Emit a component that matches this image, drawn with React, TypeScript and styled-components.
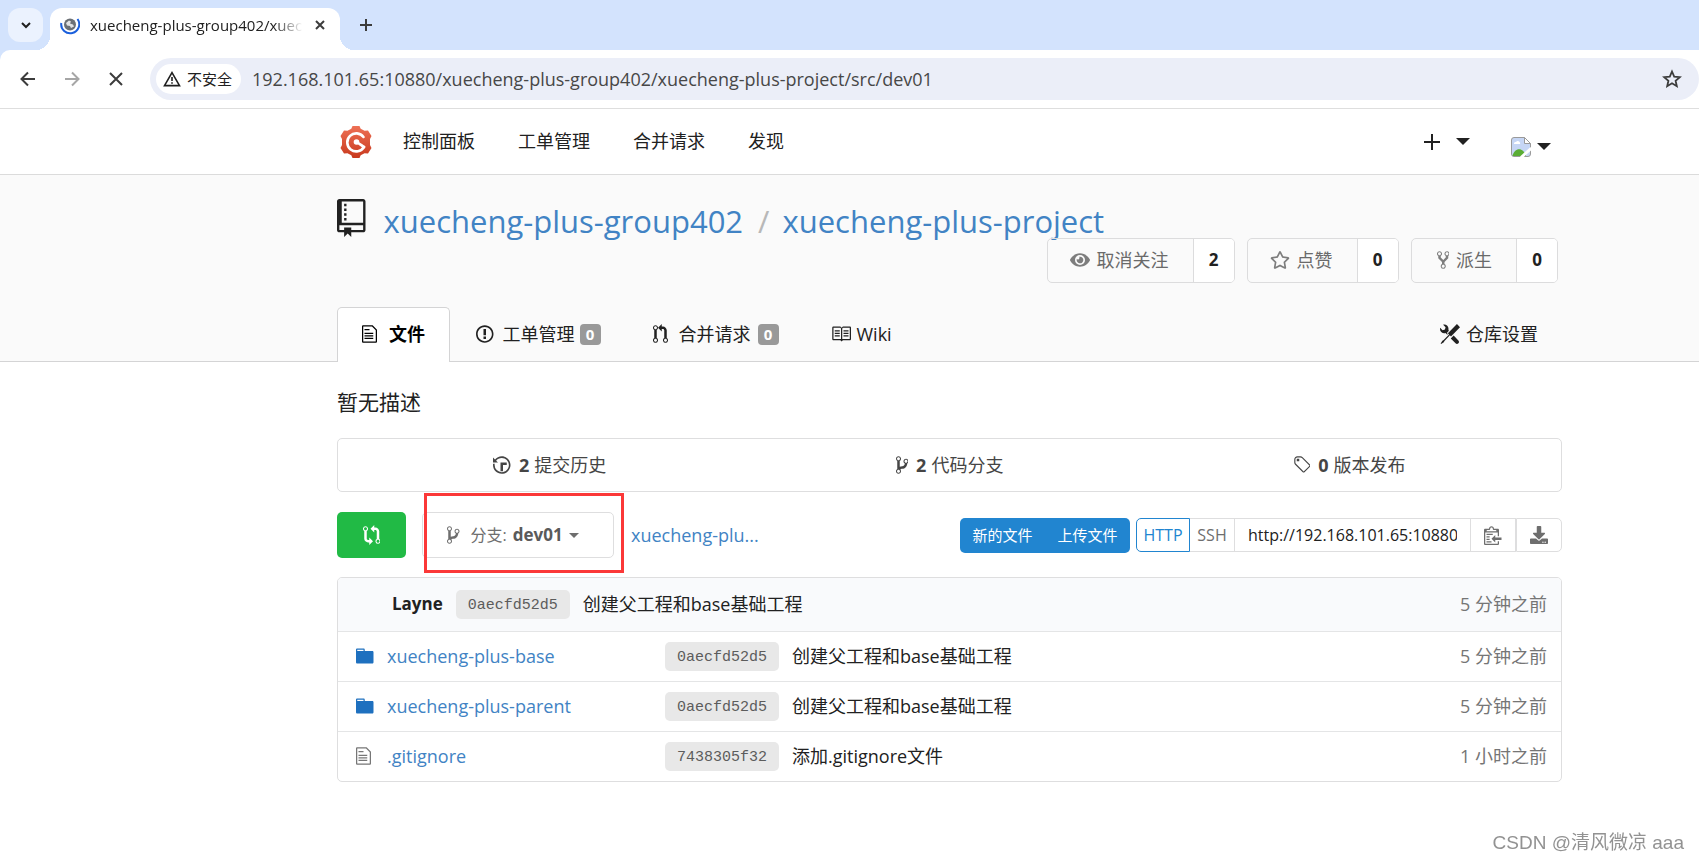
import React from 'react';
import styled, { createGlobalStyle, css } from 'styled-components';
import { FaDownload, FaEye, FaRegStar } from 'react-icons/fa';

const GlobalStyle = createGlobalStyle`
  *, *::before, *::after { box-sizing: border-box; }
  body {
    margin: 0;
    background: #fff;
    color: #212121;
    font-family: "Open Sans", "Noto Sans CJK SC", sans-serif;
    font-size: 18px;
    line-height: 24px;
  }
  button, input {
    font: inherit;
    color: inherit;
    margin: 0;
    padding: 0;
    border: 0;
    background: none;
  }
  button { cursor: pointer; }
  a { color: inherit; text-decoration: none; }
  svg { display: block; flex: none; }
`;

/* ---------- icons ---------- */

const icons = {
  repo: [12, 'M4 9H3V8h1v1zm0-3H3v1h1V6zm0-2H3v1h1V4zm0-2H3v1h1V2zm8-1v12c0 .55-.45 1-1 1H6v2l-1.5-1.5L3 16v-2H1c-.55 0-1-.45-1-1V1c0-.55.45-1 1-1h10c.55 0 1 .45 1 1zm-1 10H1v2h2v-1h3v1h5v-2zm0-10H2v9h9V1z'],
  file: [12, 'M6 5H2V4h4v1zM2 8h7V7H2v1zm0 2h7V9H2v1zm0 2h7v-1H2v1zm10-7.5V14c0 .55-.45 1-1 1H1c-.55 0-1-.45-1-1V2c0-.55.45-1 1-1h7.5L12 4.5zM11 5L8 2H1v12h10V5z'],
  issue: [14, 'M7 2.3c3.14 0 5.7 2.56 5.7 5.7s-2.56 5.7-5.7 5.7A5.71 5.71 0 0 1 1.3 8c0-3.14 2.56-5.7 5.7-5.7zM7 1C3.14 1 0 4.14 0 8s3.14 7 7 7 7-3.14 7-7-3.14-7-7-7zm1 3H6v5h2V4zm0 6H6v2h2v-2z'],
  pull: [12, 'M11 11.28V5c-.03-.78-.34-1.47-.94-2.06C9.46 2.35 8.78 2.03 8 2H7V0L4 3l3 3V4h1c.27.02.48.11.69.31.21.2.3.42.31.69v6.28A1.993 1.993 0 0 0 10 15a1.993 1.993 0 0 0 1-3.72zm-1 2.92c-.66 0-1.2-.55-1.2-1.2 0-.65.55-1.2 1.2-1.2.65 0 1.2.55 1.2 1.2 0 .65-.55 1.2-1.2 1.2zM4 3c0-1.11-.89-2-2-2a1.993 1.993 0 0 0-1 3.72v6.56A1.993 1.993 0 0 0 2 15a1.993 1.993 0 0 0 1-3.72V4.72c.59-.34 1-.98 1-1.72zm-.8 10c0 .66-.55 1.2-1.2 1.2-.65 0-1.2-.55-1.2-1.2 0-.65.55-1.2 1.2-1.2.65 0 1.2.55 1.2 1.2zM2 4.2C1.34 4.2.8 3.65.8 3c0-.65.55-1.2 1.2-1.2.65 0 1.2.55 1.2 1.2 0 .65-.55 1.2-1.2 1.2z'],
  book: [16, 'M3 5h4v1H3V5zm0 3h4V7H3v1zm0 2h4V9H3v1zm11-5h-4v1h4V5zm0 2h-4v1h4V7zm0 2h-4v1h4V9zm2-6v9c0 .55-.45 1-1 1H9.5l-1 1-1-1H2c-.55 0-1-.45-1-1V3c0-.55.45-1 1-1h5.5l1 1 1-1H15c.55 0 1 .45 1 1zm-8 .5L7.5 3H2v9h6V3.5zm7-.5H9.5l-.5.5V12h6V3z'],
  tools: [16, 'M4.48 7.27c.26.26 1.28 1.33 1.28 1.33l.56-.58-.88-.91 1.69-1.8s-.76-.74-.43-.45c.32-1.19.03-2.51-.87-3.44C4.93.5 3.66.2 2.52.51l1.93 2-.51 1.96-1.89.52-1.93-1.99C-.19 4.17.1 5.48 1 6.4c.94.98 2.29 1.26 3.48.87zm6.44 1.94l-2.33 2.3 3.84 3.98c.31.33.73.49 1.14.49.41 0 .82-.16 1.14-.49.63-.65.63-1.7 0-2.35l-3.79-3.93zM16 2.53L13.55 0 6.33 7.46l.88.91-4.31 4.46-.99.53-1.39 2.27.35.37 2.2-1.44.51-1.02L7.9 9.08l.88.91L16 2.53z'],
  history: [14, 'M8 13H6V6h5v2H8v5zM7 1C4.81 1 2.87 2.02 1.59 3.59L0 2v4h4L2.5 4.5C3.55 3.17 5.17 2.3 7 2.3c3.14 0 5.7 2.56 5.7 5.7s-2.56 5.7-5.7 5.7A5.71 5.71 0 0 1 1.3 8c0-.34.03-.67.09-1H.08C.03 7.33 0 7.66 0 8c0 3.86 3.14 7 7 7s7-3.14 7-7-3.14-7-7-7z'],
  branch: [10, 'M10 5c0-1.11-.89-2-2-2a1.993 1.993 0 0 0-1 3.72v.3c-.02.52-.23.98-.63 1.38-.4.4-.86.61-1.38.63-.83.02-1.48.16-2 .45V4.72a1.993 1.993 0 0 0-1-3.72C.88 1 0 1.89 0 3a2 2 0 0 0 1 1.72v6.56c-.59.35-1 .99-1 1.72 0 1.11.89 2 2 2 1.11 0 2-.89 2-2 0-.53-.2-1-.53-1.36.09-.06.48-.41.59-.47.25-.11.56-.17.94-.17 1.05-.05 1.95-.45 2.75-1.25S8.95 7.77 9 6.73h-.02C9.59 6.37 10 5.73 10 5zM2 1.8c.66 0 1.2.55 1.2 1.2 0 .65-.55 1.2-1.2 1.2C1.35 4.2.8 3.65.8 3c0-.65.55-1.2 1.2-1.2zm0 12.41c-.66 0-1.2-.55-1.2-1.2 0-.65.55-1.2 1.2-1.2.65 0 1.2.55 1.2 1.2 0 .65-.55 1.2-1.2 1.2zm6-8c-.66 0-1.2-.55-1.2-1.2 0-.65.55-1.2 1.2-1.2.65 0 1.2.55 1.2 1.2 0 .65-.55 1.2-1.2 1.2z'],
  fork: [10, 'M8 1a1.993 1.993 0 0 0-1 3.72V6L5 8 3 6V4.72A1.993 1.993 0 0 0 2 1a1.993 1.993 0 0 0-1 3.72V6.5l3 3v1.78A1.993 1.993 0 0 0 5 15a1.993 1.993 0 0 0 1-3.72V9.5l3-3V4.72A1.993 1.993 0 0 0 8 1zM2 4.2C1.34 4.2.8 3.65.8 3c0-.65.55-1.2 1.2-1.2.65 0 1.2.55 1.2 1.2 0 .65-.55 1.2-1.2 1.2zm3 10c-.66 0-1.2-.55-1.2-1.2 0-.65.55-1.2 1.2-1.2.65 0 1.2.55 1.2 1.2 0 .65-.55 1.2-1.2 1.2zm3-10c-.66 0-1.2-.55-1.2-1.2 0-.65.55-1.2 1.2-1.2.65 0 1.2.55 1.2 1.2 0 .65-.55 1.2-1.2 1.2z'],
  compare: [14, 'M5 12H4c-.27-.02-.48-.11-.69-.31-.21-.2-.3-.42-.31-.69V4.72A1.993 1.993 0 0 0 2 1a1.993 1.993 0 0 0-1 3.72V11c.03.78.34 1.47.94 2.06.6.59 1.28.91 2.06.94h1v2l3-3-3-3v2zM2 1.8c.66 0 1.2.55 1.2 1.2 0 .65-.55 1.2-1.2 1.2C1.35 4.2.8 3.65.8 3c0-.65.55-1.2 1.2-1.2zm11 9.48V5c-.03-.78-.34-1.47-.94-2.06-.6-.59-1.28-.91-2.06-.94H9V0L6 3l3 3V4h1c.27.02.48.11.69.31.21.2.3.42.31.69v6.28A1.993 1.993 0 0 0 12 15a1.993 1.993 0 0 0 1-3.72zm-1 2.92c-.66 0-1.2-.55-1.2-1.2 0-.65.55-1.2 1.2-1.2.65 0 1.2.55 1.2 1.2 0 .65-.55 1.2-1.2 1.2z'],
  folder: [14, 'M13 4H7V3c0-.66-.31-1-1-1H1c-.55 0-1 .45-1 1v10c0 .55.45 1 1 1h12c.55 0 1-.45 1-1V5c0-.55-.45-1-1-1zM6 4H1V3h5v1z'],
  tag: [14, 'M7.73 1.73C7.26 1.26 6.62 1 5.96 1H3.5C2.13 1 1 2.13 1 3.5v2.47c0 .66.27 1.3.73 1.77l6.06 6.06c.39.39 1.02.39 1.41 0l4.59-4.59a.996.996 0 0 0 0-1.41L7.73 1.73zM2.38 7.09c-.31-.3-.47-.7-.47-1.13V3.5c0-.88.72-1.59 1.59-1.59h2.47c.42 0 .83.16 1.13.47l6.14 6.13-4.73 4.73-6.13-6.15zM3.01 3h2v2H3V3h.01z'],
  clip: [14, 'M2 13h4v1H2v-1zm5-6H2v1h5V7zm2 3V8l-3 3 3 3v-2h5v-2H9zM4.5 9H2v1h2.5V9zM2 12h2.5v-1H2v1zm9 1h1v2c-.02.28-.11.52-.3.7-.19.18-.42.28-.7.3H1c-.55 0-1-.45-1-1V4c0-.55.45-1 1-1h3c0-1.11.89-2 2-2 1.11 0 2 .89 2 2h3c.55 0 1 .45 1 1v5h-1V6H1v9h10v-2zM2 5h8c0-.55-.45-1-1-1H8c-.55 0-1-.45-1-1s-.45-1-1-1-1 .45-1 1-.45 1-1 1H3c-.55 0-1 .45-1 1z'],
} as const;

function Octicon({ name, size = 20 }: { name: keyof typeof icons; size?: number }) {
  const [width, d] = icons[name];
  return (
    <svg width={(size * width) / 16} height={size} viewBox={`0 0 ${width} 16`} fill="currentColor" aria-hidden="true">
      <path d={d} />
    </svg>
  );
}

function Stroke({ size, d, width = 2 }: { size: number; d: string; width?: number }) {
  return (
    <svg width={size} height={size} viewBox={`0 0 ${size} ${size}`} fill="none" stroke="currentColor" strokeWidth={width} aria-hidden="true">
      <path d={d} />
    </svg>
  );
}

function Caret({ size }: { size: number }) {
  return (
    <svg width={size} height={size / 2} viewBox="0 0 14 7" fill="currentColor" aria-hidden="true">
      <path d="M0 0h14L7 7z" />
    </svg>
  );
}

function LoadingGlobe() {
  return (
    <svg width="20" height="20" viewBox="0 0 20 20" aria-hidden="true">
      <circle cx="10" cy="9.5" r="6" fill="#6b7075" />
      <path d="M6 8l3-2.500 2 1-1 2 3 1 1 2-3 1.500-1-2-3-.5z" fill="#fff" opacity=".8" />
      <path d="M1.300 8A9 9 0 1 0 17.500 4" fill="none" stroke="#1a5fdc" strokeWidth="2" />
    </svg>
  );
}

function GogsLogo() {
  return (
    <svg width="32" height="34" viewBox="0 0 32 34" aria-hidden="true">
      <defs>
        <linearGradient id="gear" x1="0" y1="0" x2="0" y2="1">
          <stop offset="0" stopColor="#ee7156" />
          <stop offset="1" stopColor="#c8391d" />
        </linearGradient>
      </defs>
      <path
        d="M12.500 1h7l1.200 2.800 3.800 2 3.500-.3 3.500 5.500-1.500 3v6l1.500 3-3.500 5.500-3.500-.3-3.800 2-1.200 2.800h-7l-1.200-2.800-3.800-2-3.500.3L.5 23 2 20v-6l-1.500-3L4 5.500l3.500.3 3.800-2z"
        fill="url(#gear)"
      />
      <path d="M23.500 12A9 9 0 1 0 24 22" fill="none" stroke="#fff" strokeWidth="2.600" strokeLinecap="round" />
      <circle cx="16.500" cy="17" r="2.800" fill="#fff" />
      <path d="M16.500 17.500C19 18 21 20 24 22" fill="none" stroke="#fff" strokeWidth="2.800" strokeLinecap="round" />
    </svg>
  );
}

function BrokenImage() {
  return (
    <svg width="20" height="20" viewBox="0 0 20 20" role="img" aria-label="avatar">
      <path d="M3 .5h10.500l6 6V17a2.500 2.500 0 0 1-2.500 2.500H3A2.500 2.500 0 0 1 .5 17V3A2.500 2.500 0 0 1 3 .5z" fill="#c6d6f5" stroke="#9a9a9a" />
      <path d="M13.500.5v6h6z" fill="#fff" stroke="#9a9a9a" />
      <path d="M3 7a1.800 1.800 0 0 1 2-2 2 2 0 0 1 3.500 0A1.500 1.500 0 0 1 9 7z" fill="#fff" />
      <path d="M1.500 19c2-9 11-9 13.500 0z" fill="#5aad35" />
      <path d="M10 20.500l10.500-9.500" stroke="#fff" strokeWidth="3" />
    </svg>
  );
}

/* ---------- browser chrome ---------- */

const TabStrip = styled.div`
  display: flex;
  height: 50px;
  padding: 8px 8px 0;
  background: #d3e3fd;
`;

const TabSearch = styled.button`
  display: grid;
  place-items: center;
  width: 35px;
  height: 34px;
  border-radius: 12px;
  background: #ebf2fe;
  color: #1f1f1f;
`;

const BrowserTab = styled.div`
  position: relative;
  display: flex;
  align-items: center;
  width: 290px;
  height: 42px;
  margin-left: 7px;
  padding: 0 12px 8px 10px;
  border-radius: 12px 12px 0 0;
  background: #fff;

  &::before, &::after {
    content: "";
    position: absolute;
    bottom: 0;
    width: 14px;
    height: 14px;
  }
  &::before { right: 100%; background: radial-gradient(circle at 0 0, transparent 14px, #fff 14px); }
  &::after { left: 100%; background: radial-gradient(circle at 100% 0, transparent 14px, #fff 14px); }
`;

const TabTitle = styled.span`
  flex: 1;
  min-width: 0;
  margin: 0 9px 0 10px;
  overflow: hidden;
  white-space: nowrap;
  font-size: 15px;
  mask-image: linear-gradient(90deg, #000 86%, transparent);
`;

const PlainButton = styled.button<{ $size?: number }>`
  display: grid;
  place-items: center;
  width: ${(p) => p.$size ?? 20}px;
  height: ${(p) => p.$size ?? 20}px;
  color: #3c3c3c;
  &:disabled { color: #a6a6a6; }
`;

const NewTab = styled(PlainButton)`
  margin: 7px 0 0 16px;
`;

const AddressRow = styled.div`
  display: flex;
  align-items: center;
  height: 59px;
  padding-left: 18px;
  border-bottom: 1px solid #dedede;
`;

const ChromeBody = styled.div`
  background: #d3e3fd;
  > div { border-radius: 10px 0 0 0; background: #fff; }
`;

const NavButtons = styled.div`
  display: flex;
  gap: 24px;
  margin-right: 24px;
`;

const AddressBar = styled.div`
  display: flex;
  flex: 1;
  align-items: center;
  height: 42px;
  padding: 0 17px 0 6px;
  border-radius: 21px;
  background: #ebeef8;
`;

const SecurityChip = styled.button`
  display: flex;
  align-items: center;
  gap: 6px;
  height: 30px;
  margin-right: 11px;
  padding: 0 9px 0 7px;
  border-radius: 15px;
  background: #fff;
  color: #1f1f1f;
  font-size: 15px;
`;

const UrlInput = styled.input`
  flex: 1;
  min-width: 0;
  color: #474747;
  outline: none;
`;

/* ---------- site ---------- */

const gutters = css`
  padding-left: 337px;
  padding-right: 137px;
`;

const SiteNav = styled.nav`
  ${gutters}
  display: flex;
  align-items: center;
  height: 66px;
  border-bottom: 1px solid #dbdbdb;
`;

const HomeLink = styled.a`
  margin: 0 31px 0 3px;
`;

const NavLinks = styled.div`
  display: flex;
  flex: 1;
  gap: 43px;
  padding-bottom: 2px;
`;

const NavMenu = styled.button<{ $gap: number }>`
  display: flex;
  align-items: center;
  gap: ${(p) => p.$gap}px;
  margin-left: 41px;
  &:last-child { padding: 10px 11px 0 0; }
`;

const RepoHeader = styled.header`
  ${gutters}
  padding-top: 20px;
  border-bottom: 1px solid #d4d4d5;
  background: #fafafa;
`;

const RepoTitle = styled.h1`
  display: flex;
  align-items: flex-start;
  margin: 0;
  height: 43px;
  font-size: 31px;
  font-weight: 400;
  line-height: 52px;
  color: #4183c4;

  svg { margin: 4px 18px 0 0; color: #212121; }
`;

const Slash = styled.span`
  margin: 0 13px 0 15px;
  color: #b8b8b8;
`;

const RepoActions = styled.div`
  display: flex;
  justify-content: flex-end;
  gap: 12px;
  padding-right: 4px;
`;

const Counted = styled.div`
  display: flex;
  height: 45px;
  border: 1px solid #dcdcdd;
  border-radius: 5px;
`;

const CountedButton = styled.button<{ $inset?: number }>`
  display: flex;
  align-items: center;
  gap: 7px;
  padding: 0 24px 2px ${(p) => p.$inset ?? 22}px;
  color: #6a6a6a;
  svg { color: #7d7d7d; }
`;

const CountLink = styled.a`
  display: grid;
  place-items: center;
  width: 41px;
  padding-bottom: 2px;
  border-left: 1px solid #dcdcdd;
  border-radius: 0 4px 4px 0;
  background: #fff;
  font-size: 17px;
  font-weight: 700;
`;

const TabMenu = styled.nav`
  display: flex;
  margin-top: 24px;
`;

const TabLink = styled.a<{ $active?: boolean; $gap?: number }>`
  display: flex;
  align-items: center;
  gap: ${(p) => p.$gap ?? 9}px;
  height: 54px;
  padding: 0 25px 1px;
  border: 1px solid transparent;
  border-bottom: 0;
  ${(p) =>
    p.$active &&
    css`
      margin-bottom: -1px;
      height: 55px;
      padding: 0 24px 2px;
      border-color: #d4d4d5;
      border-radius: 5px 5px 0 0;
      background: #fff;
      color: #000;
      font-weight: 700;
    `}
  &:last-child { margin-left: auto; padding-right: 23px; }
`;

const Badge = styled.span`
  display: grid;
  place-items: center;
  width: 21px;
  height: 21px;
  margin-left: -4px;
  border-radius: 4px;
  background: #999;
  color: #fff;
  font-size: 15px;
  font-weight: 700;
  line-height: 21px;
`;

const Content = styled.main`
  ${gutters}
  padding-top: 25px;
  padding-bottom: 40px;
`;

const Description = styled.p`
  margin: 0 0 21px;
  font-size: 21px;
  line-height: 30px;
`;

const Stats = styled.div`
  display: grid;
  grid-template-columns: repeat(3, 1fr);
  height: 54px;
  padding: 0 12px;
  border: 1px solid #dededf;
  border-radius: 5px;
`;

const StatLink = styled.a`
  display: flex;
  align-items: center;
  justify-content: center;
  gap: 5px;
  color: #454545;
  b { margin-left: 3px; }
`;

const Toolbar = styled.div`
  display: flex;
  align-items: center;
  margin: 20px 0 19px;
`;

const CompareButton = styled.button`
  display: grid;
  place-items: center;
  width: 69px;
  height: 46px;
  border-radius: 5px;
  background: #21ba45;
  color: #fff;
`;

const BranchPicker = styled.div`
  position: relative;
  margin: 0 17px 0 16px;
`;

const BranchButton = styled.button`
  display: flex;
  align-items: center;
  width: 192px;
  height: 46px;
  padding-left: 24px;
  border: 1px solid #dededf;
  border-radius: 5px;
  color: #6e6e6e;
  font-size: 16px;
  b { margin: 0 6px; color: #5a5a5a; font-size: 17px; }
  span { margin-left: 11px; }
`;

const Marker = styled.div`
  position: absolute;
  top: -19px;
  left: 2px;
  width: 200px;
  height: 80px;
  border: 3px solid #fb3838;
  pointer-events: none;
`;

const BlueLink = styled.a`
  color: #4183c4;
`;

const UploadGroup = styled.div`
  display: flex;
  margin: 0 6px 0 auto;
  border-radius: 5px;
  background: #2185d0;
  color: #fff;
`;

const UploadButton = styled.button`
  width: 85px;
  height: 35px;
  padding: 0 12px;
  font-size: 15px;
  white-space: nowrap;
`;

const CloneGroup = styled.div`
  display: flex;
  height: 34px;
`;

const CloneButton = styled.button<{ $active?: boolean; $width: number; $end?: boolean }>`
  display: grid;
  place-items: center;
  width: ${(p) => p.$width}px;
  border: 1px solid ${(p) => (p.$active ? '#2185d0' : '#dededf')};
  border-left-width: ${(p) => (p.$active || p.$end ? 1 : 0)}px;
  border-radius: ${(p) => (p.$active ? '5px 0 0 5px' : p.$end ? '0 5px 5px 0' : '0')};
  color: ${(p) => (p.$active ? '#2185d0' : '#6e6e6e')};
  font-size: 16px;
`;

const CloneInput = styled.input`
  width: 236px;
  padding: 0 13px;
  border: 1px solid #dededf;
  border-left-width: 0;
  font-size: 16px;
`;

const FilePanel = styled.div`
  border: 1px solid #dededf;
  border-radius: 5px;
  overflow: hidden;
`;

const FileTable = styled.table`
  width: 100%;
  border-collapse: collapse;
  table-layout: fixed;

  th, td {
    padding: 0;
    height: 50px;
    border-top: 1px solid #e4e5e6;
    font-weight: 400;
    text-align: left;
  }
  thead th {
    height: 53px;
    border-top: 0;
    background: #f9fafc;
  }
`;

const Line = styled.div<{ $inset?: number }>`
  display: flex;
  align-items: center;
  gap: 13px;
  padding-left: ${(p) => p.$inset ?? 0}px;
  b { font-size: 17px; }
`;

const IconSlot = styled.span<{ $color: string }>`
  display: flex;
  width: 18px;
  color: ${(p) => p.$color};
`;

const Sha = styled.a`
  display: block;
  width: 114px;
  height: 29px;
  border-radius: 5px;
  background: #e8e8e8;
  color: #5c5c5c;
  font-family: "Liberation Mono", monospace;
  font-size: 15px;
  line-height: 32px;
  text-align: center;
`;

const Time = styled.div`
  padding-right: 14px;
  color: #757575;
  text-align: right;
`;

const Watermark = styled.div`
  position: fixed;
  right: 15px;
  bottom: 6px;
  color: #929292;
  font-family: "Liberation Sans", "Noto Sans CJK SC", sans-serif;
  font-size: 19px;
`;

const files = [
  { kind: 'folder', name: 'xuecheng-plus-base', sha: '0aecfd52d5', message: '创建父工程和base基础工程', time: '5 分钟之前' },
  { kind: 'folder', name: 'xuecheng-plus-parent', sha: '0aecfd52d5', message: '创建父工程和base基础工程', time: '5 分钟之前' },
  { kind: 'file', name: '.gitignore', sha: '7438305f32', message: '添加.gitignore文件', time: '1 小时之前' },
] as const;

function BrowserChrome() {
  return (
    <>
      <TabStrip>
        <TabSearch aria-label="搜索标签页">
          <Stroke size={12} d="M2 4l4 4 4-4" />
        </TabSearch>
        <BrowserTab>
          <LoadingGlobe />
          <TabTitle>xuecheng-plus-group402/xuecheng-plus-project</TabTitle>
          <PlainButton aria-label="关闭" $size={16}>
            <Stroke size={10} d="M1 1l8 8M9 1L1 9" />
          </PlainButton>
        </BrowserTab>
        <NewTab aria-label="新标签页">
          <Stroke size={14} d="M7 1v12M1 7h12" />
        </NewTab>
      </TabStrip>
      <ChromeBody>
        <AddressRow>
          <NavButtons>
            <PlainButton aria-label="后退">
              <Stroke size={16} d="M15 8H2M8 1.500L1.500 8 8 14.500" />
            </PlainButton>
            <PlainButton aria-label="前进" disabled>
              <Stroke size={16} d="M1 8h13M8 1.500L14.500 8 8 14.500" />
            </PlainButton>
            <PlainButton aria-label="停止">
              <Stroke size={14} d="M1 1l12 12M13 1L1 13" />
            </PlainButton>
          </NavButtons>
          <AddressBar>
            <SecurityChip>
              <svg width="18" height="16" viewBox="0 0 18 16" fill="none" stroke="currentColor" strokeWidth="1.600" aria-hidden="true">
                <path d="M9 1.700L16.500 14.600h-15zM9 6v4M9 11.200v1.600" />
              </svg>
              不安全
            </SecurityChip>
            <UrlInput
              aria-label="地址"
              defaultValue="192.168.101.65:10880/xuecheng-plus-group402/xuecheng-plus-project/src/dev01"
            />
            <PlainButton aria-label="收藏">
              <svg width="20" height="20" viewBox="0 0 20 20" fill="none" stroke="currentColor" strokeWidth="1.800" aria-hidden="true">
                <path d="M10 2.500l2.200 5.100 5.600.5-4.200 3.700 1.200 5.400-4.800-2.900-4.800 2.900 1.200-5.400-4.200-3.700 5.600-.5z" />
              </svg>
            </PlainButton>
          </AddressBar>
        </AddressRow>
      </ChromeBody>
    </>
  );
}

export default function App() {
  return (
    <>
      <GlobalStyle />
      <BrowserChrome />
      <SiteNav>
        <HomeLink href="#" aria-label="Gogs">
          <GogsLogo />
        </HomeLink>
        <NavLinks>
          <a href="#">控制面板</a>
          <a href="#">工单管理</a>
          <a href="#">合并请求</a>
          <a href="#">发现</a>
        </NavLinks>
        <NavMenu $gap={16} aria-label="创建">
          <Stroke size={16} d="M8 0v16M0 8h16" />
          <Caret size={14} />
        </NavMenu>
        <NavMenu $gap={6} aria-label="用户">
          <BrokenImage />
          <Caret size={14} />
        </NavMenu>
      </SiteNav>

      <RepoHeader>
        <RepoTitle>
          <Octicon name="repo" size={38} />
          <a href="#">xuecheng-plus-group402</a>
          <Slash>/</Slash>
          <a href="#">xuecheng-plus-project</a>
        </RepoTitle>
        <RepoActions>
          <Counted>
            <CountedButton>
              <FaEye size={20} />
              取消关注
            </CountedButton>
            <CountLink href="#">2</CountLink>
          </Counted>
          <Counted>
            <CountedButton>
              <FaRegStar size={20} />
              点赞
            </CountedButton>
            <CountLink href="#">0</CountLink>
          </Counted>
          <Counted>
            <CountedButton $inset={25}>
              <Octicon name="fork" />
              派生
            </CountedButton>
            <CountLink href="#">0</CountLink>
          </Counted>
        </RepoActions>
        <TabMenu>
          <TabLink href="#" $active $gap={12}>
            <Octicon name="file" />
            文件
          </TabLink>
          <TabLink href="#">
            <Octicon name="issue" />
            工单管理
            <Badge>0</Badge>
          </TabLink>
          <TabLink href="#" $gap={11}>
            <Octicon name="pull" />
            合并请求
            <Badge>0</Badge>
          </TabLink>
          <TabLink href="#" $gap={6}>
            <Octicon name="book" />
            Wiki
          </TabLink>
          <TabLink href="#" $gap={6}>
            <Octicon name="tools" />
            仓库设置
          </TabLink>
        </TabMenu>
      </RepoHeader>

      <Content>
        <Description>暂无描述</Description>
        <Stats>
          <StatLink href="#">
            <Octicon name="history" />
            <b>2</b> 提交历史
          </StatLink>
          <StatLink href="#">
            <Octicon name="branch" />
            <b>2</b> 代码分支
          </StatLink>
          <StatLink href="#">
            <Octicon name="tag" />
            <b>0</b> 版本发布
          </StatLink>
        </Stats>

        <Toolbar>
          <CompareButton aria-label="对比">
            <Octicon name="compare" />
          </CompareButton>
          <BranchPicker>
            <BranchButton>
              <Octicon name="branch" />
              <span>分支:</span>
              <b>dev01</b>
              <Caret size={10} />
            </BranchButton>
            <Marker />
          </BranchPicker>
          <BlueLink href="#">xuecheng-plu...</BlueLink>
          <UploadGroup>
            <UploadButton>新的文件</UploadButton>
            <UploadButton>上传文件</UploadButton>
          </UploadGroup>
          <CloneGroup>
            <CloneButton $active $width={54}>HTTP</CloneButton>
            <CloneButton $width={45}>SSH</CloneButton>
            <CloneInput
              aria-label="克隆地址"
              readOnly
              value="http://192.168.101.65:10880/xuecheng-plus-group402/xuecheng-plus-project.git"
            />
            <CloneButton $width={45} aria-label="复制">
              <Octicon name="clip" />
            </CloneButton>
            <CloneButton $width={46} $end aria-label="下载">
              <FaDownload size={18} />
            </CloneButton>
          </CloneGroup>
        </Toolbar>

        <FilePanel>
          <FileTable>
            <colgroup>
              <col width="327" />
              <col />
              <col width="160" />
            </colgroup>
            <thead>
              <tr>
                <th colSpan={2}>
                  <Line $inset={54}>
                    <b>Layne</b>
                    <Sha href="#">0aecfd52d5</Sha>
                    <span>创建父工程和base基础工程</span>
                  </Line>
                </th>
                <th>
                  <Time>5 分钟之前</Time>
                </th>
              </tr>
            </thead>
            <tbody>
              {files.map((file) => (
                <tr key={file.name}>
                  <td>
                    <Line $inset={18}>
                      <IconSlot $color={file.kind === 'folder' ? '#1e70bf' : '#767676'}>
                        <Octicon name={file.kind} />
                      </IconSlot>
                      <BlueLink href="#">{file.name}</BlueLink>
                    </Line>
                  </td>
                  <td>
                    <Line>
                      <Sha href="#">{file.sha}</Sha>
                      <span>{file.message}</span>
                    </Line>
                  </td>
                  <td>
                    <Time>{file.time}</Time>
                  </td>
                </tr>
              ))}
            </tbody>
          </FileTable>
        </FilePanel>
      </Content>
      <Watermark>CSDN @清风微凉 aaa</Watermark>
    </>
  );
}
